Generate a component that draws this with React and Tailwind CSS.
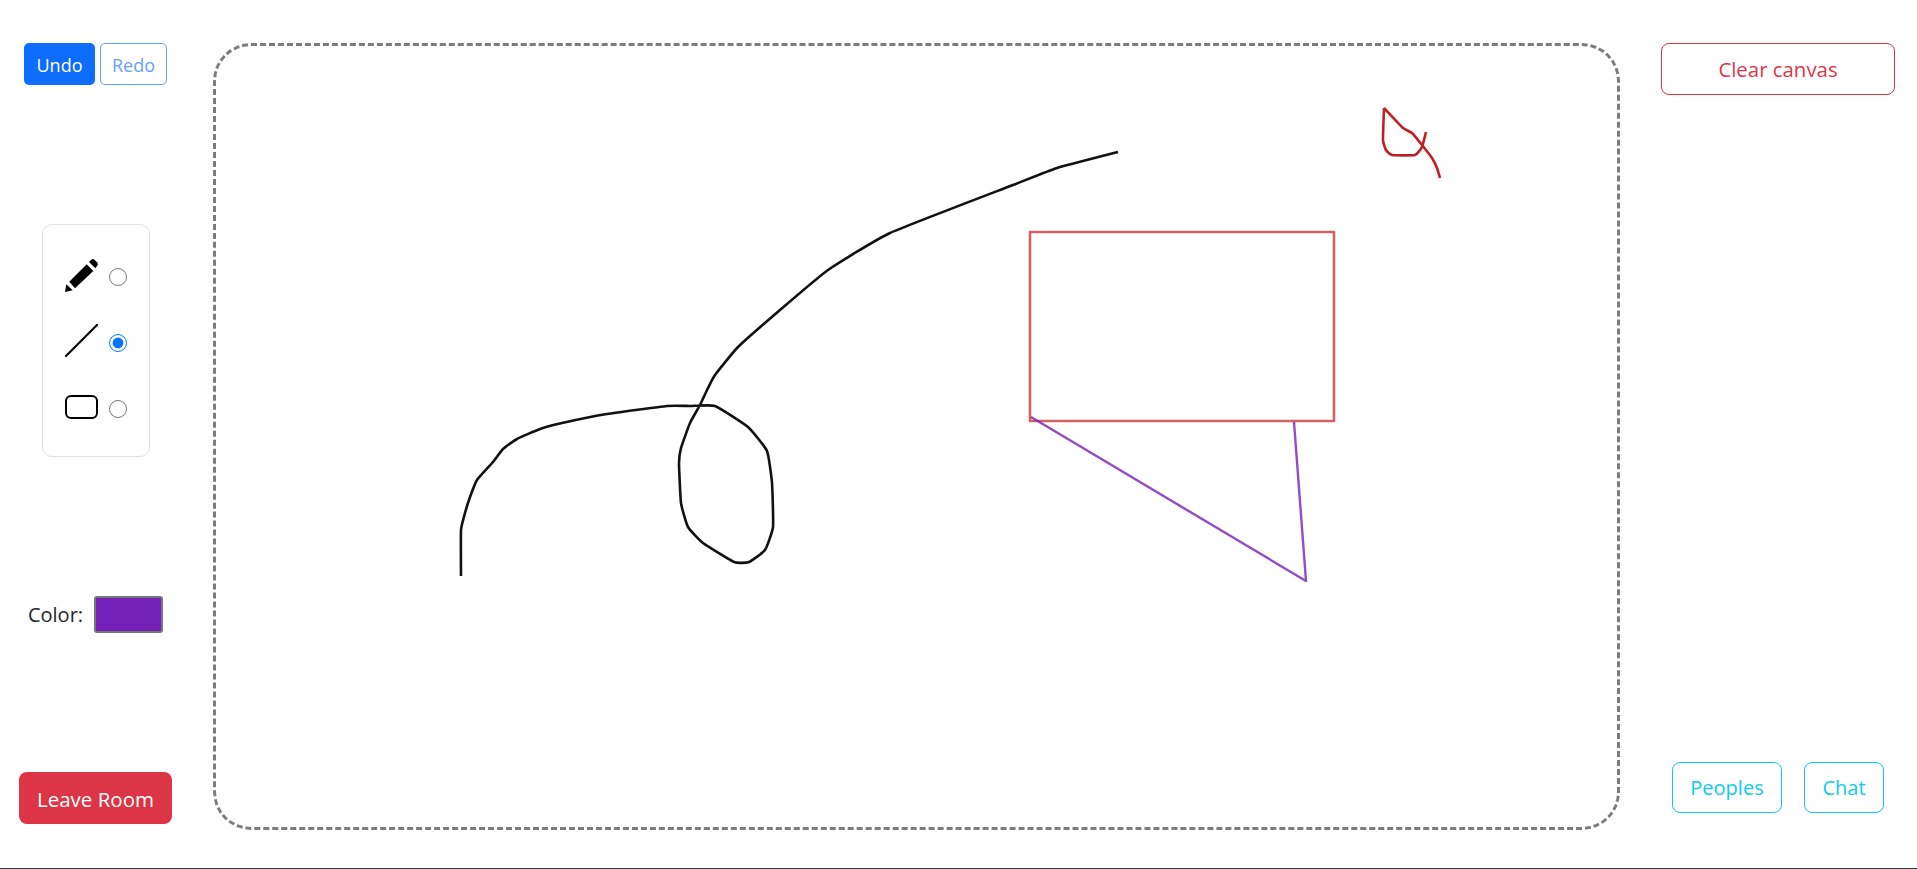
const FONT = "font-['Open_Sans','Noto_Sans',sans-serif]"

const BLACK_STROKE = [
  [461, 576], [461, 530], [465, 513], [470, 497], [477, 480], [493, 462], [503, 449], [517, 439], [540, 429], [562, 423], [607, 414],
  [667, 406], [690, 406], [715, 406], [748, 427], [767, 451], [772, 483], [773, 527], [765, 550], [749, 562], [734, 562], [703, 543],
  [688, 527], [681, 503], [679, 463], [681, 448], [690, 423], [700, 405], [708, 388], [715, 375], [738, 347], [780, 310],
  [828, 270], [890, 233], [1013, 185], [1057, 168], [1118, 152],
]

const RED_STROKE_A = [[1440, 178], [1437, 168], [1432, 158], [1422, 145], [1412, 133], [1403, 128], [1384, 108]]
const RED_STROKE_B = [[1384, 108], [1383, 140], [1386, 150], [1392, 155], [1415, 155], [1422, 147], [1426, 132]]

// freehand strokes: only soften the corners between the sampled points
const toPath = (pts) => {
  let d = `M${pts[0][0]},${pts[0][1]}`
  for (let i = 0; i < pts.length - 1; i++) {
    const p0 = pts[i - 1] ?? pts[i]
    const p1 = pts[i]
    const p2 = pts[i + 1]
    const p3 = pts[i + 2] ?? p2
    const c1 = [p1[0] + (p2[0] - p0[0]) / 14, p1[1] + (p2[1] - p0[1]) / 14]
    const c2 = [p2[0] - (p3[0] - p1[0]) / 14, p2[1] - (p3[1] - p1[1]) / 14]
    d += ` C${c1[0]},${c1[1]} ${c2[0]},${c2[1]} ${p2[0]},${p2[1]}`
  }
  return d
}

function PencilIcon() {
  return (
    <svg width="33" height="34" viewBox="0 0 33 34" fill="black">
      <polygon points="0,34 1.3,26.3 7.7,32.3" />
      <polygon points="4.3,23.7 21.7,6.3 28.3,13 10,30.3" />
      <path d="M24,4 L26,2 Q27.5,0.6 29,1.2 L32,4.2 Q33.4,5.8 32.4,7.6 L30.3,10.3 Z" />
    </svg>
  )
}

function ToolRow({ icon, checked }) {
  return (
    <div className="flex items-center gap-[11px]">
      <div className="w-[33px] h-[33px] flex items-center justify-center text-black">{icon}</div>
      <input type="radio" name="tool" defaultChecked={checked} className="w-[18px] h-[18px] mx-0 mb-0 mt-[4px]" />
    </div>
  )
}

export default function App() {
  return (
    <div className={`flex h-screen bg-white border-b border-[#343a40] text-[#212529] ${FONT}`}>
      {/* Left column */}
      <div className="w-[191px] flex flex-col items-center justify-between pt-[43px] pb-[44px]">
        <div className="flex gap-[5px]">
          <button className="w-[71px] h-[42px] pt-[2px] rounded-[5px] bg-[#0d6efd] text-white text-[18px]">Undo</button>
          <button className="w-[67px] h-[42px] pt-[2px] rounded-[5px] border border-[#0d6efd] text-[#0d6efd] text-[18px] opacity-65">Redo</button>
        </div>

        <div className="w-[108px] h-[233px] rounded-[10px] border border-[#dee2e6] flex flex-col items-center justify-center gap-[33px]">
          <ToolRow icon={<PencilIcon />} />
          <ToolRow
            checked
            icon={
              <svg width="33" height="33" viewBox="0 0 33 33">
                <line x1="1" y1="32" x2="32" y2="1" stroke="black" strokeWidth="2.2" strokeLinecap="round" />
              </svg>
            }
          />
          <ToolRow
            icon={
              <svg width="33" height="24" viewBox="0 0 33 24">
                <rect x="1" y="1" width="31" height="22" rx="5" fill="none" stroke="black" strokeWidth="2" />
              </svg>
            }
          />
        </div>

        <div className="flex items-center gap-[11px]">
          <span className="text-[20px] pt-[1px]">Color:</span>
          <div className="w-[69px] h-[37px] rounded-[3px] border-2 border-[#767676] bg-[#7420b9]" />
        </div>

        <button className="w-[153px] h-[52px] pt-[2px] rounded-[8px] bg-[#dc3545] text-white text-[20.5px]">Leave Room</button>
      </div>

      {/* Canvas */}
      <div className="w-[1407px] h-[787px] mt-[43px] ml-[22px] mr-[19px] border-[3px] border-dashed border-[#7c7c7c] rounded-[38px]">
        <svg width="1401" height="781" viewBox="216 46 1401 781" className="block" fill="none" strokeLinejoin="round">
          <path d={toPath(BLACK_STROKE)} stroke="#111111" strokeWidth="2.6" />
          <path d={toPath(RED_STROKE_A)} stroke="#bf2026" strokeWidth="2.6" />
          <path d={toPath(RED_STROKE_B)} stroke="#bf2026" strokeWidth="2.6" />
          <rect x="1030" y="232" width="304" height="189" stroke="#c9474c" strokeWidth="2.6" opacity="0.85" />
          <polyline points="1031,417 1306,581 1294,422" stroke="#7420b9" strokeWidth="2.4" opacity="0.8" />
        </svg>
      </div>

      {/* Right column */}
      <div className="w-[278px] flex flex-col items-center justify-between pt-[43px] pb-[55px]">
        <button className="w-[234px] h-[52px] rounded-[8px] border border-[#dc3545] text-[#dc3545] text-[20.4px]">Clear canvas</button>
        <div className="flex gap-[22px]">
          <button className="w-[110px] h-[51px] rounded-[8px] border border-[#0dcaf0] text-[#0dcaf0] text-[20px]">Peoples</button>
          <button className="w-[80px] h-[51px] rounded-[8px] border border-[#0dcaf0] text-[#0dcaf0] text-[20px]">Chat</button>
        </div>
      </div>
    </div>
  )
}
